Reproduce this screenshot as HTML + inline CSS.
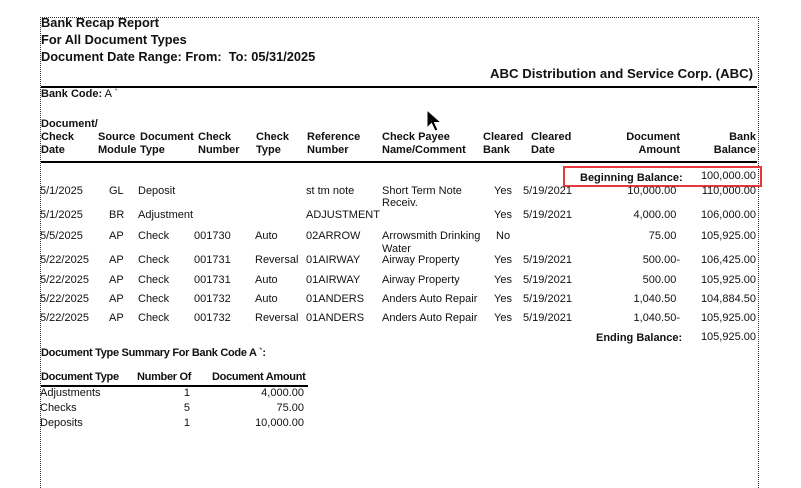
<!DOCTYPE html>
<html><head><meta charset="utf-8"><style>
body{margin:0;width:801px;height:482px;background:#fff;position:relative;overflow:hidden;font-family:"Liberation Sans",Arial,sans-serif;color:#111;}
div{position:absolute;white-space:nowrap;}
.t{font-size:12.8px;font-weight:bold;}
.s{font-size:11px;line-height:13px;}
.b{font-weight:bold;}
.r{text-align:right;}
.h{visibility:hidden}
</style></head><body>
<div style="left:40px;top:17px;width:717px;height:470px;border-left:1px dotted #333;border-top:1px dotted #333;border-right:1px dotted #333;"></div>
<div class="t" style="left:41px;top:15px">Bank Recap Report</div>
<div class="t" style="left:41px;top:32px">For All Document Types</div>
<div class="t" style="left:41px;top:49px">Document Date Range: From:&nbsp; To: 05/31/2025</div>
<div class="t" style="left:490px;top:66px;font-size:13.2px">ABC Distribution and Service Corp. (ABC)</div>
<div style="left:41px;top:86px;width:716px;height:2px;background:#000"></div>
<div class="s" style="left:41px;top:88px"><b>Bank Code:</b> A `</div>
<div class="s b" style="left:41px;top:118px;line-height:13px">Document/<br>Check<br>Date</div>
<div class="s b" style="left:98px;top:131px">Source<br>Module</div>
<div class="s b" style="left:140px;top:131px">Document<br>Type</div>
<div class="s b" style="left:198px;top:131px">Check<br>Number</div>
<div class="s b" style="left:256px;top:131px">Check<br>Type</div>
<div class="s b" style="left:307px;top:131px">Reference<br>Number</div>
<div class="s b" style="left:382px;top:131px">Check Payee<br>Name/Comment</div>
<div class="s b" style="left:483px;top:131px">Cleared<br>Bank</div>
<div class="s b" style="left:531px;top:131px">Cleared<br>Date</div>
<div class="s b r" style="left:600px;width:80px;top:131px">Document<br>Amount</div>
<div class="s b r" style="left:680px;width:76px;top:131px">Bank<br>Balance</div>
<div style="left:41px;top:161px;width:716px;height:2px;background:#000"></div>
<div style="left:563px;top:166px;width:195px;height:17px;border:2px solid #e8383d"></div>
<div class="s b" style="left:580px;top:172px">Beginning Balance:</div>
<div class="s r" style="left:680px;width:76px;top:170px">100,000.00</div>

<div class="s" style="left:40px;top:185px">5/1/2025</div><div class="s" style="left:109px;top:185px">GL</div><div class="s" style="left:138px;top:185px">Deposit</div><div class="s" style="left:306px;top:185px">st tm note</div><div class="s" style="left:382px;top:185px;line-height:12px">Short Term Note<br>Receiv.</div><div class="s" style="left:494px;top:185px">Yes</div><div class="s" style="left:523px;top:185px">5/19/2021</div><div class="s r" style="left:580px;width:100px;top:185px">10,000.00<span class="h">-</span></div><div class="s r" style="left:660px;width:96px;top:185px">110,000.00</div>

<div class="s" style="left:40px;top:209px">5/1/2025</div><div class="s" style="left:109px;top:209px">BR</div><div class="s" style="left:138px;top:209px">Adjustment</div><div class="s" style="left:306px;top:209px">ADJUSTMENT</div><div class="s" style="left:494px;top:209px">Yes</div><div class="s" style="left:523px;top:209px">5/19/2021</div><div class="s r" style="left:580px;width:100px;top:209px">4,000.00<span class="h">-</span></div><div class="s r" style="left:660px;width:96px;top:209px">106,000.00</div>

<div class="s" style="left:40px;top:230px">5/5/2025</div><div class="s" style="left:109px;top:230px">AP</div><div class="s" style="left:138px;top:230px">Check</div><div class="s" style="left:194px;top:230px">001730</div><div class="s" style="left:255px;top:230px">Auto</div><div class="s" style="left:306px;top:230px">02ARROW</div><div class="s" style="left:382px;top:230px;line-height:13px">Arrowsmith Drinking<br>Water</div><div class="s" style="left:496px;top:230px">No</div><div class="s r" style="left:580px;width:100px;top:230px">75.00<span class="h">-</span></div><div class="s r" style="left:660px;width:96px;top:230px">105,925.00</div>

<div class="s" style="left:40px;top:254px">5/22/2025</div><div class="s" style="left:109px;top:254px">AP</div><div class="s" style="left:138px;top:254px">Check</div><div class="s" style="left:194px;top:254px">001731</div><div class="s" style="left:255px;top:254px">Reversal</div><div class="s" style="left:306px;top:254px">01AIRWAY</div><div class="s" style="left:382px;top:254px">Airway Property</div><div class="s" style="left:494px;top:254px">Yes</div><div class="s" style="left:523px;top:254px">5/19/2021</div><div class="s r" style="left:580px;width:100px;top:254px">500.00-</div><div class="s r" style="left:660px;width:96px;top:254px">106,425.00</div>

<div class="s" style="left:40px;top:274px">5/22/2025</div><div class="s" style="left:109px;top:274px">AP</div><div class="s" style="left:138px;top:274px">Check</div><div class="s" style="left:194px;top:274px">001731</div><div class="s" style="left:255px;top:274px">Auto</div><div class="s" style="left:306px;top:274px">01AIRWAY</div><div class="s" style="left:382px;top:274px">Airway Property</div><div class="s" style="left:494px;top:274px">Yes</div><div class="s" style="left:523px;top:274px">5/19/2021</div><div class="s r" style="left:580px;width:100px;top:274px">500.00<span class="h">-</span></div><div class="s r" style="left:660px;width:96px;top:274px">105,925.00</div>

<div class="s" style="left:40px;top:293px">5/22/2025</div><div class="s" style="left:109px;top:293px">AP</div><div class="s" style="left:138px;top:293px">Check</div><div class="s" style="left:194px;top:293px">001732</div><div class="s" style="left:255px;top:293px">Auto</div><div class="s" style="left:306px;top:293px">01ANDERS</div><div class="s" style="left:382px;top:293px">Anders Auto Repair</div><div class="s" style="left:494px;top:293px">Yes</div><div class="s" style="left:523px;top:293px">5/19/2021</div><div class="s r" style="left:580px;width:100px;top:293px">1,040.50<span class="h">-</span></div><div class="s r" style="left:660px;width:96px;top:293px">104,884.50</div>

<div class="s" style="left:40px;top:312px">5/22/2025</div><div class="s" style="left:109px;top:312px">AP</div><div class="s" style="left:138px;top:312px">Check</div><div class="s" style="left:194px;top:312px">001732</div><div class="s" style="left:255px;top:312px">Reversal</div><div class="s" style="left:306px;top:312px">01ANDERS</div><div class="s" style="left:382px;top:312px">Anders Auto Repair</div><div class="s" style="left:494px;top:312px">Yes</div><div class="s" style="left:523px;top:312px">5/19/2021</div><div class="s r" style="left:580px;width:100px;top:312px">1,040.50-</div><div class="s r" style="left:660px;width:96px;top:312px">105,925.00</div>

<div class="s b" style="left:596px;top:332px">Ending Balance:</div>
<div class="s r" style="left:660px;width:96px;top:331px">105,925.00</div>

<div class="s b" style="left:41px;top:347px;letter-spacing:-0.3px">Document Type Summary For Bank Code A `:</div>
<div class="s b" style="left:41px;top:371px;letter-spacing:-0.3px">Document Type</div>
<div class="s b" style="left:137px;top:371px;letter-spacing:-0.3px">Number Of</div>
<div class="s b" style="left:212px;top:371px;letter-spacing:-0.3px">Document Amount</div>
<div style="left:41px;top:385px;width:267px;height:2px;background:#000"></div>
<div class="s" style="left:40px;top:387px">Adjustments</div><div class="s r" style="left:150px;width:40px;top:387px">1</div><div class="s r" style="left:200px;width:104px;top:387px">4,000.00</div>
<div class="s" style="left:40px;top:402px">Checks</div><div class="s r" style="left:150px;width:40px;top:402px">5</div><div class="s r" style="left:200px;width:104px;top:402px">75.00</div>
<div class="s" style="left:40px;top:417px">Deposits</div><div class="s r" style="left:150px;width:40px;top:417px">1</div><div class="s r" style="left:200px;width:104px;top:417px">10,000.00</div>

<svg style="position:absolute;left:426px;top:109px" width="18" height="24" viewBox="0 0 18 24"><path d="M1 1 L1 19 L5.5 14.5 L9 22 L12 21 L8.5 13.5 L15 13.5 Z" fill="#000" stroke="#fff" stroke-width="1"/></svg>
</body></html>
